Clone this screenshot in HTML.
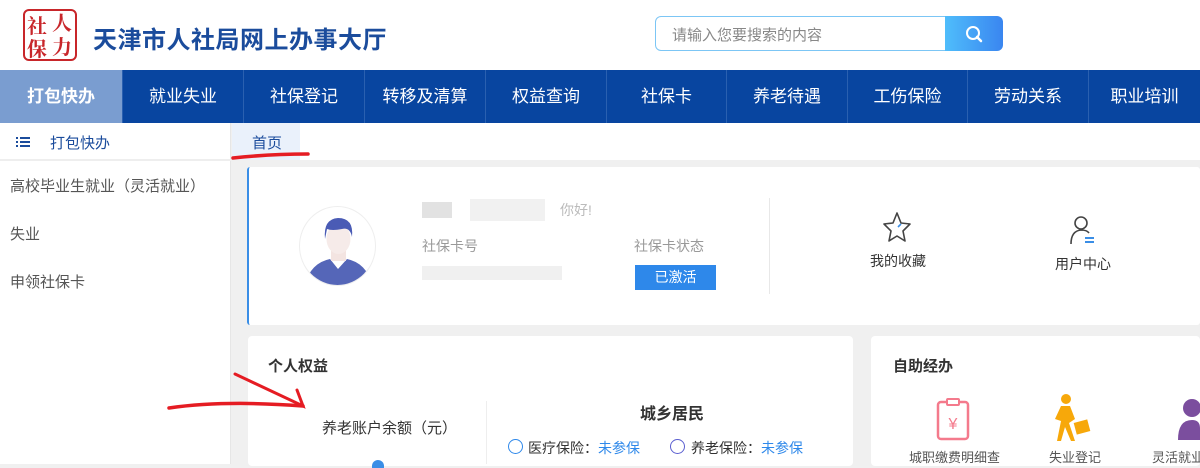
<!DOCTYPE html>
<html><head><meta charset="utf-8"><style>
*{margin:0;padding:0;box-sizing:border-box}
body{width:1200px;height:464px;overflow:hidden;background:#f0f0f0;font-family:"Liberation Sans","Noto Sans CJK SC",sans-serif;position:relative}
.a{position:absolute}
.nav{top:70px;left:0;width:1200px;height:53px;background:#0845a0}
.nav div{position:absolute;top:0;height:53px;line-height:53px;text-align:center;color:#fff;font-size:17px;border-left:1px solid #2a60b0}
.t{white-space:nowrap}
</style></head><body>
<div class="a" style="left:0;top:0;width:1200px;height:70px;background:#fff"></div>
<div class="a" style="left:23px;top:9px;width:54px;height:52px;border:2px solid #c8262a;border-radius:6px;background:#fff"></div>
<div class="a t" style="left:25px;top:10px;font-size:20px;font-weight:bold;color:#c8262a;font-family:'Noto Serif CJK SC',serif;line-height:23px;width:52px">
<span style="position:absolute;left:2px;top:3px">社</span><span style="position:absolute;left:27px;top:0">人</span><span style="position:absolute;left:2px;top:26px">保</span><span style="position:absolute;left:27px;top:24px">力</span></div>
<div class="a t" style="left:93px;top:20px;font-size:24px;font-weight:bold;color:#1b4c9c;letter-spacing:0.5px">天津市人社局网上办事大厅</div>
<div class="a" style="left:655px;top:16px;width:292px;height:35px;border:1px solid #7cc6f5;border-radius:6px 0 0 6px;background:#fff"></div>
<div class="a t" style="left:672px;top:24px;font-size:15px;color:#888">请输入您要搜索的内容</div>
<div class="a" style="left:945px;top:16px;width:58px;height:35px;border-radius:0 6px 6px 0;background:linear-gradient(90deg,#4fbdfb,#3a86f0)"></div>
<svg class="a" style="left:964px;top:24px" width="22" height="20" viewBox="0 0 22 20"><circle cx="9" cy="9" r="6" fill="none" stroke="#fff" stroke-width="2"/><path d="M13 13l4 4" stroke="#fff" stroke-width="2.5" stroke-linecap="round"/></svg>
<div class="a nav">
<div style="left:0;width:122px;background:#7a9dd0;border:none;font-weight:bold">打包快办</div>
<div style="left:122px;width:121px">就业失业</div>
<div style="left:243px;width:121px">社保登记</div>
<div style="left:364px;width:121px">转移及清算</div>
<div style="left:485px;width:121px">权益查询</div>
<div style="left:606px;width:120px">社保卡</div>
<div style="left:726px;width:121px">养老待遇</div>
<div style="left:847px;width:120px">工伤保险</div>
<div style="left:967px;width:121px">劳动关系</div>
<div style="left:1088px;width:112px">职业培训</div>
</div>
<div class="a" style="left:0;top:123px;width:231px;height:341px;background:#fff;border-right:1px solid #e6e6e6"></div>
<div class="a" style="left:0;top:159px;width:231px;height:2px;background:#eee"></div>
<svg class="a" style="left:16px;top:136px" width="14" height="12"><g fill="#1b4c9c"><rect x="0" y="1" width="2" height="2"/><rect x="4" y="1" width="10" height="2"/><rect x="0" y="5" width="2" height="2"/><rect x="4" y="5" width="10" height="2"/><rect x="0" y="9" width="2" height="2"/><rect x="4" y="9" width="10" height="2"/></g></svg>
<div class="a t" style="left:50px;top:132px;font-size:15px;color:#1b4c9c">打包快办</div>
<div class="a t" style="left:10px;top:175px;font-size:15px;color:#555">高校毕业生就业（灵活就业）</div>
<div class="a t" style="left:10px;top:223px;font-size:15px;color:#555">失业</div>
<div class="a t" style="left:10px;top:271px;font-size:15px;color:#555">申领社保卡</div>
<div class="a" style="left:232px;top:123px;width:968px;height:37px;background:#fff"></div>
<div class="a" style="left:232px;top:123px;width:68px;height:37px;background:#eaf1fb"></div>
<div class="a t" style="left:252px;top:132px;font-size:15px;color:#1b4c9c">首页</div>
<svg class="a" style="left:230px;top:150px" width="82" height="12"><path d="M3 8 Q40 4 78 4" stroke="#e51c23" stroke-width="3.5" fill="none" stroke-linecap="round"/></svg>
<div class="a" style="left:247px;top:167px;width:953px;height:158px;background:#fff;border-left:2px solid #3a8ee6;border-radius:3px"></div>
<div class="a" style="left:299px;top:206px;width:77px;height:80px;border-radius:50%;border:1px solid #eee;overflow:hidden;background:#fff">
<svg width="77" height="80" viewBox="0 0 77 80"><path d="M4 80 Q10 56 30 52 L38 62 L47 52 Q67 56 73 80Z" fill="#5566b8"/><rect x="31" y="40" width="15" height="14" fill="#f3e4e1"/><ellipse cx="38.5" cy="32" rx="12" ry="15" fill="#f6ebe9"/><path d="M25 32 Q23 12 38 11 Q54 11 52 30 Q50 20 42 22 Q32 24 27 22Z" fill="#4a5bb5"/></svg></div>
<div class="a" style="left:422px;top:202px;width:30px;height:16px;background:#e2e2e2"></div>
<div class="a" style="left:470px;top:199px;width:75px;height:22px;background:#f1f1f1"></div>
<div class="a t" style="left:560px;top:200px;font-size:14px;color:#bbb">你好!</div>
<div class="a t" style="left:422px;top:236px;font-size:14px;color:#999">社保卡号</div>
<div class="a" style="left:422px;top:266px;width:140px;height:14px;background:#f0f0f0"></div>
<div class="a t" style="left:634px;top:236px;font-size:14px;color:#999">社保卡状态</div>
<div class="a t" style="left:635px;top:265px;width:81px;height:25px;background:#2e88ea;color:#fff;font-size:14px;text-align:center;line-height:25px">已激活</div>
<div class="a" style="left:769px;top:198px;width:1px;height:96px;background:#e8e8e8"></div>
<svg class="a" style="left:882px;top:211px" width="30" height="32" viewBox="0 0 30 32"><path d="M15 2 L19 12 L28 13 L21 20 L23 30 L15 25 L7 30 L9 20 L2 13 L11 12Z" fill="none" stroke="#444" stroke-width="1.6" stroke-linejoin="round"/><path d="M16 16 L19 13" stroke="#3a8ee6" stroke-width="1.6"/></svg>
<div class="a t" style="left:870px;top:251px;font-size:14px;color:#333">我的收藏</div>
<svg class="a" style="left:1068px;top:214px" width="30" height="32" viewBox="0 0 30 32"><circle cx="13" cy="9" r="6" fill="none" stroke="#444" stroke-width="1.6"/><path d="M3 30 Q3 17 13 16 Q19 16 21 19" fill="none" stroke="#444" stroke-width="1.6"/><rect x="17" y="23" width="9" height="2" fill="#3a8ee6"/><rect x="17" y="27" width="9" height="2" fill="#3a8ee6"/></svg>
<div class="a t" style="left:1055px;top:254px;font-size:14px;color:#333">用户中心</div>
<div class="a" style="left:248px;top:336px;width:605px;height:130px;background:#fff;border-radius:4px"></div>
<div class="a t" style="left:268px;top:355px;font-size:15px;font-weight:bold;color:#333">个人权益</div>
<div class="a t" style="left:322px;top:417px;font-size:15px;color:#333">养老账户余额（元）</div>
<div class="a" style="left:372px;top:460px;width:12px;height:8px;border-radius:6px 6px 0 0;background:#3a8ee6"></div>
<div class="a" style="left:486px;top:401px;width:1px;height:63px;background:#eee"></div>
<div class="a t" style="left:640px;top:400px;font-size:16px;font-weight:bold;color:#333">城乡居民</div>
<div class="a" style="left:508px;top:439px;width:15px;height:15px;border:1.5px solid #2e88ea;border-radius:50%"></div>
<div class="a t" style="left:528px;top:438px;font-size:14px;color:#333">医疗保险：<span style="color:#2e88ea">未参保</span></div>
<div class="a" style="left:670px;top:439px;width:15px;height:15px;border:1.5px solid #5b5fd0;border-radius:50%"></div>
<div class="a t" style="left:691px;top:438px;font-size:14px;color:#333">养老保险：<span style="color:#2e88ea">未参保</span></div>
<div class="a" style="left:871px;top:336px;width:329px;height:130px;background:#fff;border-radius:4px"></div>
<div class="a t" style="left:893px;top:355px;font-size:15px;font-weight:bold;color:#333">自助经办</div>
<svg class="a" style="left:936px;top:397px" width="34" height="44" viewBox="0 0 34 44"><rect x="2" y="5" width="30" height="37" rx="3" fill="none" stroke="#f47a8c" stroke-width="2.5"/><rect x="11" y="2" width="12" height="6" rx="1" fill="#fff" stroke="#f47a8c" stroke-width="2"/><text x="17" y="32" font-size="16" fill="#f47a8c" text-anchor="middle" font-family="Liberation Sans">¥</text></svg>
<div class="a t" style="left:909px;top:447px;font-size:13px;color:#555">城职缴费明细查</div>
<svg class="a" style="left:1055px;top:393px" width="40" height="50" viewBox="0 0 40 50"><circle cx="11" cy="6" r="5" fill="#f7a80a"/><path d="M6 13 L15 13 L20 26 L14 30 L20 48 L16 48 L10 34 L6 48 L2 48 L6 28 L0 26 Z" fill="#f7a80a"/><rect x="20" y="28" width="14" height="12" transform="rotate(-15 27 34)" fill="#f7a80a"/></svg>
<div class="a t" style="left:1049px;top:447px;font-size:13px;color:#555">失业登记</div>
<svg class="a" style="left:1176px;top:398px" width="24" height="42" viewBox="0 0 24 42"><circle cx="16" cy="10" r="9" fill="#7b4e9e"/><path d="M2 42 Q2 22 16 22 Q24 22 24 30 L24 42Z" fill="#7b4e9e"/></svg>
<div class="a t" style="left:1152px;top:447px;font-size:13px;color:#555">灵活就业</div>
<svg class="a" style="left:165px;top:370px" width="145" height="45" viewBox="0 0 145 45"><path d="M4 38 Q60 30 138 36" stroke="#e51c23" stroke-width="3.5" fill="none" stroke-linecap="round"/><path d="M70 4 L138 36 L132 20" stroke="#e51c23" stroke-width="3" fill="none" stroke-linecap="round"/></svg>
</body></html>
